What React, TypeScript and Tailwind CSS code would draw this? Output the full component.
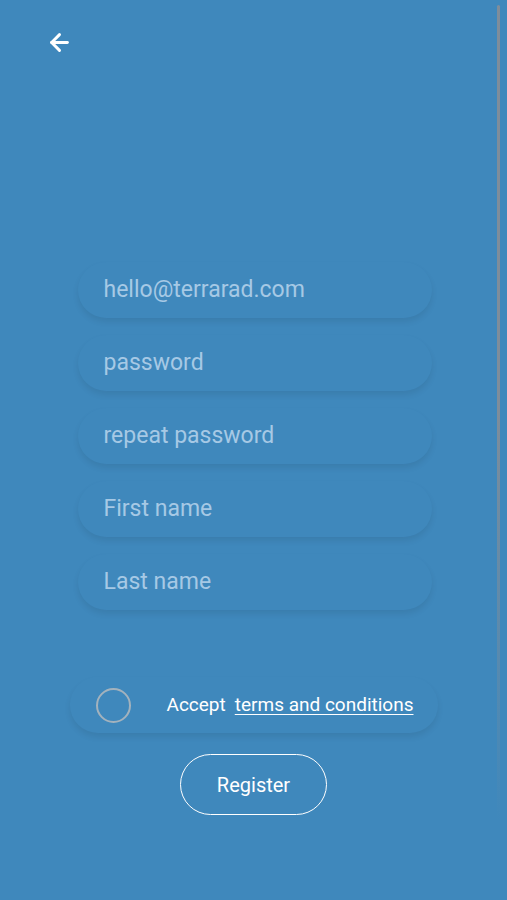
import { ArrowLeft } from "lucide-react";

const fields = ["hello@terrarad.com", "password", "repeat password", "First name", "Last name"];

export default function App() {
    return (
        <div
            className="relative h-[900px] w-[507px] overflow-hidden bg-[#3f88bc]"
            style={{ fontFamily: "Roboto, 'Liberation Sans', sans-serif" }}
        >
            <div className="absolute right-[7px] top-[5px] h-[815px] w-[3px] rounded-full bg-gradient-to-b from-[#7f8d9a] via-[#7f8d9a] to-transparent" />

            <header className="px-[46px] pt-[29px]">
                <ArrowLeft className="h-[27px] w-[27px] text-white" strokeWidth={2.6} />
            </header>

            <main className="mt-[206px] flex flex-col items-center">
                <div className="ml-[2px] flex w-[354px] flex-col gap-[17px]">
                    {fields.map((f) => (
                        <div
                            key={f}
                            className="flex h-[56px] items-center rounded-[28px] bg-[#3f88bc] pl-[26px] text-[23px] text-[#a6c9e5] shadow-[0_4px_6px_rgba(0,0,0,0.08)]"
                        >
                            {f}
                        </div>
                    ))}
                </div>

                <div className="mt-[67px] flex h-[56px] w-[368px] items-center rounded-[28px] pl-[26px] text-[19px] text-white shadow-[0_4px_6px_rgba(0,0,0,0.08)]">
                    <span className="h-[35px] w-[35px] rounded-full border-2 border-[#a3b2bd]" />
                    <span className="ml-[36px]">Accept</span>
                    <span className="ml-[9px] underline underline-offset-[3px]">terms and conditions</span>
                </div>

                <button className="mt-[21px] h-[61px] w-[147px] rounded-full border-[1.5px] border-white text-[20px] text-white">
                    Register
                </button>
            </main>
        </div>
    );
}
